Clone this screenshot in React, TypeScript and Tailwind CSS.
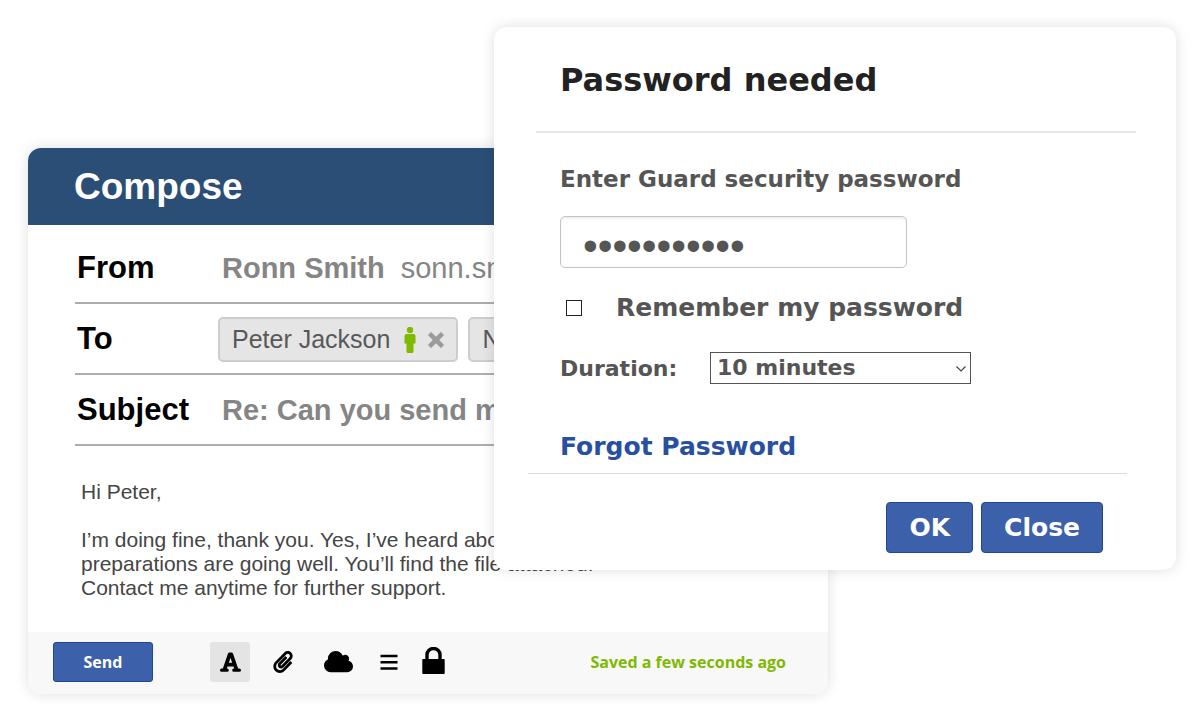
import { useState } from "react";
import type { ReactNode } from "react";
import { FaPaperclip } from "react-icons/fa";

const message = `Hi Peter,

I’m doing fine, thank you. Yes, I’ve heard about it, all
preparations are going well. You’ll find the file attached.
Contact me anytime for further support.`;

function FontIcon() {
  return (
    <svg viewBox="0 0 21 20" className="w-[21px]" fill="none" stroke="currentColor" strokeWidth="3.8" strokeLinejoin="round">
      <path d="M4.5 17.5L9.7 2.4H11.3L16.5 17.5M6.5 12.6H14.5" />
      <path d="M1.6 18.2H7.2M13.8 18.2H19.4" strokeWidth="3.2" strokeLinecap="round" />
    </svg>
  );
}

function CloudIcon() {
  return (
    <svg viewBox="64 128 1920 1408" className="w-[29px]" fill="currentColor">
      <path d="M1984 1152q0 159-112.5 271.5t-271.5 112.5h-1088q-185 0-316.5-131.5t-131.5-316.5q0-132 71-241.5t187-163.5q-2-28-2-43 0-212 150-362t362-150q158 0 286.5 88t187.5 230q70-62 166-62 106 0 181 75t75 181q0 75-41 138 129 30 213 134.5t84 239.5z" />
    </svg>
  );
}

function LinesIcon() {
  return (
    <svg viewBox="0 0 18 16" className="w-[18px]" fill="none" stroke="currentColor" strokeWidth="2.4">
      <path d="M0.5 2H17.5M0.5 8.3H17.5M0.5 14.5H17.5" />
    </svg>
  );
}

function LockIcon() {
  return (
    <svg viewBox="0 0 23 27" className="w-[23px]">
      <path d="M5 13V7.5a6.5 6 0 0 1 13 0V13" fill="none" stroke="currentColor" strokeWidth="3.4" />
      <rect x="0.3" y="12" width="22.4" height="15" rx="0.8" fill="currentColor" />
    </svg>
  );
}

function PersonIcon() {
  return (
    <svg viewBox="0 0 12 26" className="w-3" fill="#7dba00">
      <circle cx="6" cy="3" r="3.2" />
      <path d="M2.5 7h7Q11.5 7 11.5 9v7.5H9.5V24.5Q9.5 26 8 26H4Q2.5 26 2.5 24.5V16.5H0.5V9Q0.5 7 2.5 7z" />
    </svg>
  );
}

function Recipient({ name }: { name: string }) {
  return (
    <span className="flex h-[45px] shrink-0 items-center rounded-[5px] border-2 border-[#cdcdcd] bg-[#e5e5e5] px-3 text-[25px] leading-none text-[#585858]">
      {name}
      <span className="ml-3.5">
        <PersonIcon />
      </span>
      <button type="button" aria-label={`Remove ${name}`} className="ml-3">
        <svg viewBox="0 0 16 16" className="w-4" stroke="#9b9b9b" strokeWidth="4.6">
          <path d="M1.5 1.5L14.5 14.5M14.5 1.5L1.5 14.5" />
        </svg>
      </button>
    </span>
  );
}

function Row({ label, id, children }: { label: string; id?: string; children: ReactNode }) {
  return (
    <div className="flex h-[71px] items-center border-b-2 border-[#adadad] pt-0.5">
      <label htmlFor={id} className="w-[143px] shrink-0 pl-0.5 text-[31px] font-bold text-black">
        {label}
      </label>
      {children}
    </div>
  );
}

function Compose() {
  const [subject, setSubject] = useState("Re: Can you send me the file?");
  const [body, setBody] = useState(message);

  return (
    <section className="ml-7 w-2/3 overflow-hidden rounded-[13px] bg-white font-['Liberation_Sans',sans-serif] shadow-[0_0_14px_rgba(0,0,0,0.13)]">
      <h2 className="flex h-[77px] items-center bg-[#2b4e76] pl-[46px] text-[37px] font-bold text-white">Compose</h2>
      <div className="pl-[47px] pr-10 pt-2">
        <Row label="From">
          <p className="whitespace-nowrap pl-1 text-[29px] text-[#858585]">
            <strong>Ronn Smith</strong>
            <span className="ml-4">sonn.smith</span>
          </p>
        </Row>
        <Row label="To">
          <div className="flex gap-2.5">
            <Recipient name="Peter Jackson" />
            <Recipient name="Nina" />
          </div>
        </Row>
        <Row label="Subject" id="subject">
          <input
            id="subject"
            value={subject}
            onChange={(e) => setSubject(e.target.value)}
            className="min-w-0 flex-1 pl-1 text-[29px] font-bold text-[#858585] outline-none"
          />
        </Row>
      </div>
      <textarea
        aria-label="Message"
        rows={5}
        value={body}
        onChange={(e) => setBody(e.target.value)}
        className="mb-8 ml-[53px] mt-[34px] block w-4/5 resize-none overflow-hidden whitespace-pre text-[21px] leading-6 text-[#454545] outline-none"
      />
      <footer className="flex h-[62px] items-center bg-[#f8f8f8] pb-0.5 pl-[25px] pr-[42px] font-['Open_Sans',sans-serif]">
        <button type="button" className="h-10 w-[100px] rounded-[3px] border border-[#1f4798] bg-[#3c60aa] font-bold text-white">
          Send
        </button>
        <div className="ml-[57px] flex items-center gap-[22px] text-black">
          <button type="button" aria-label="Text format" className="flex h-10 w-10 items-center justify-center rounded-[3px] bg-[#e4e4e4]">
            <FontIcon />
          </button>
          <button type="button" aria-label="Attach file" className="w-6">
            <FaPaperclip size={22} />
          </button>
          <button type="button" aria-label="Add from cloud" className="flex w-10 justify-center">
            <CloudIcon />
          </button>
          <button type="button" aria-label="Options">
            <LinesIcon />
          </button>
          <button type="button" aria-label="Encrypt" className="flex w-[26px] justify-center pb-1">
            <LockIcon />
          </button>
        </div>
        <p className="ml-auto font-bold text-[#7fb800]">Saved a few seconds ago</p>
      </footer>
    </section>
  );
}

function PasswordDialog() {
  const [password, setPassword] = useState("guardsecret");
  const [remember, setRemember] = useState(false);
  const [duration, setDuration] = useState("10 minutes");

  const buttonClass = "h-[51px] rounded-[4px] border border-[#1f4798] bg-[#3c60aa] px-[22px] text-[25px] text-white";

  return (
    <div
      role="dialog"
      aria-labelledby="dialog-title"
      className="absolute left-[494px] right-6 top-[27px] rounded-[13px] bg-white font-['DejaVu_Sans',sans-serif] font-bold text-[#555555] shadow-[0_0_14px_rgba(0,0,0,0.13)]"
    >
      <header className="ml-[42px] mr-10 flex h-[106px] items-center border-b-2 border-[#e8e8e8] pl-6 pt-0.5">
        <h1 id="dialog-title" className="text-[32px] text-[#222222]">
          Password needed
        </h1>
      </header>
      <div className="pl-[66px] pr-10 pt-[31px]">
        <label htmlFor="password" className="block text-[23px] leading-[30px]">
          Enter Guard security password
        </label>
        <input
          id="password"
          type="password"
          value={password}
          onChange={(e) => setPassword(e.target.value)}
          className="mt-[22px] block h-[52px] w-[347px] rounded-[5px] border border-[#c4c4c4] px-[22px] pt-1.5 font-['Liberation_Sans',sans-serif] text-[42px] font-normal shadow-[inset_0_2px_2px_rgba(0,0,0,0.06)] outline-none"
        />
        <div className="mt-[25px] flex h-[30px] items-center pl-1.5">
          <input
            id="remember"
            type="checkbox"
            checked={remember}
            onChange={(e) => setRemember(e.target.checked)}
            className="h-4 w-4 appearance-none border border-[#222222] bg-white checked:bg-[#3c60aa]"
          />
          <label htmlFor="remember" className="ml-[34px] text-[25px]">
            Remember my password
          </label>
        </div>
        <div className="mt-[29px] flex h-8 items-center">
          <label htmlFor="duration" className="w-[150px] text-[22px]">
            Duration:
          </label>
          <div className="relative">
            <select
              id="duration"
              value={duration}
              onChange={(e) => setDuration(e.target.value)}
              className="block h-8 w-[261px] appearance-none border border-[#555555] bg-white pl-1.5 text-[22px] leading-[30px] outline-none"
            >
              <option>10 minutes</option>
              <option>20 minutes</option>
              <option>30 minutes</option>
            </select>
            <svg viewBox="0 0 10 6" className="pointer-events-none absolute right-[5px] top-[14px] w-2.5" fill="none" stroke="#444444" strokeWidth="1.2">
              <path d="M0.5 0.5L5 5L9.5 0.5" />
            </svg>
          </div>
        </div>
        <a href="#forgot" className="mt-12 block text-[25px] leading-[30px] text-[#2850a0]">
          Forgot Password
        </a>
      </div>
      <footer className="ml-[34px] mr-[49px] mt-[11px] flex justify-end gap-2 border-t border-[#dddddd] pb-[17px] pr-6 pt-7">
        <button type="button" className={buttonClass}>
          OK
        </button>
        <button type="button" className={buttonClass}>
          Close
        </button>
      </footer>
    </div>
  );
}

export default function App() {
  return (
    <main className="relative min-h-screen overflow-hidden bg-white pb-7 pt-[148px]">
      <Compose />
      <PasswordDialog />
    </main>
  );
}
